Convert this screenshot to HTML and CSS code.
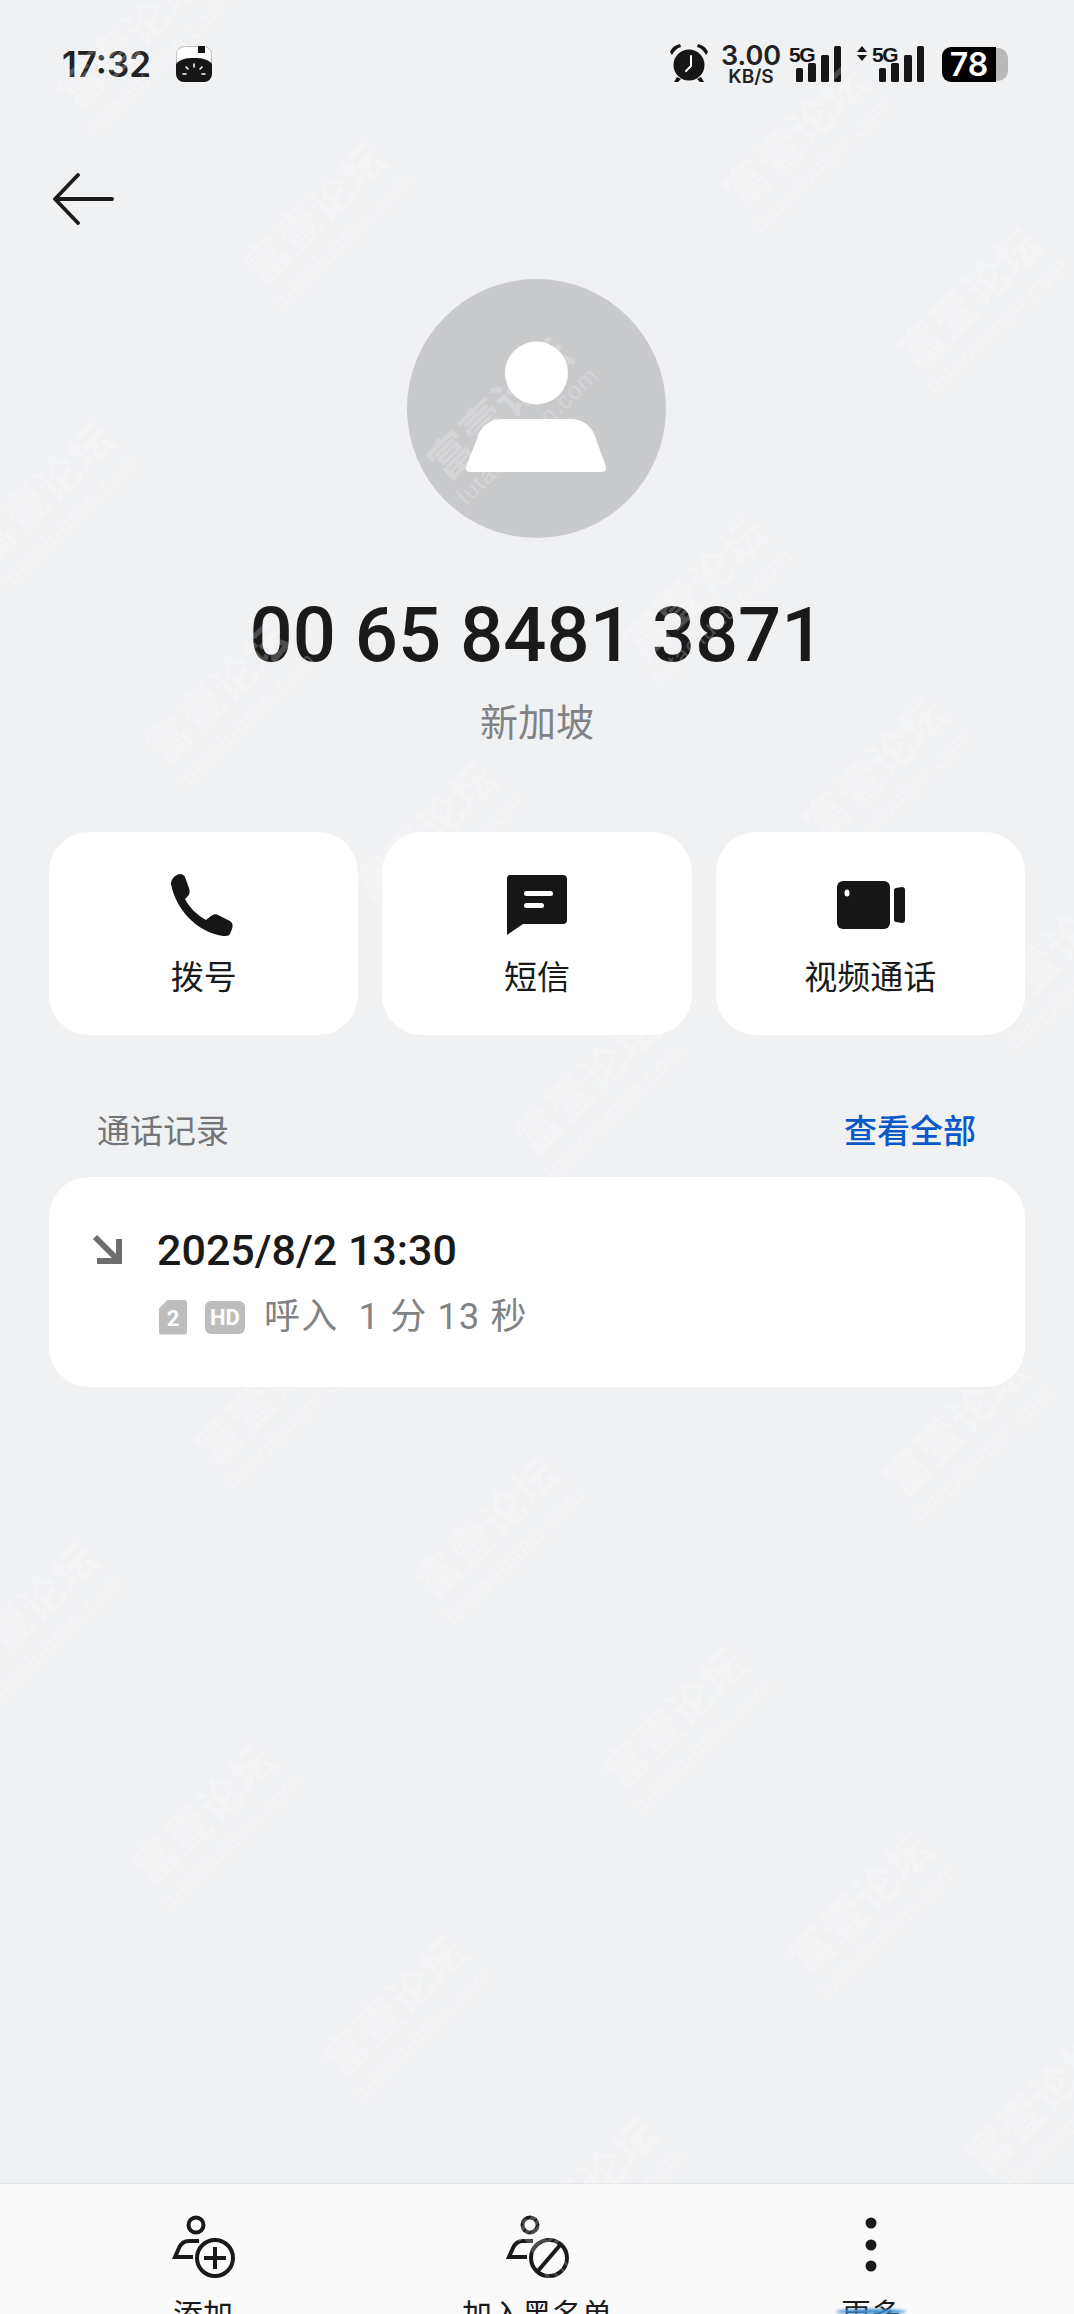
FILE: index.html
```html
<!DOCTYPE html>
<html lang="zh-CN">
<head>
<meta charset="utf-8">
<title>通话详情</title>
<link rel="stylesheet" href="styles.css">
</head>
<body>
<div class="screen">
  <div class="content">
    <header class="status">
      <div class="status-left">
        <span class="time">17:32</span>
        <svg class="app-icon" viewBox="0 0 36 36"><rect x=".5" y=".5" width="35" height="35" rx="8" fill="#fff" stroke="#bbb"/><path d="M0 18C4 13 10 12 18 12s14 1 18 6v10a8 8 0 0 1-8 8H8a8 8 0 0 1-8-8Z" fill="#161616"/><rect x="22" y="0" width="7" height="7" fill="#161616"/><path d="M18 18v3M10 21l2 2M26 21l-2 2M7 28h3M26 28h3" stroke="#fff" stroke-width="1.6" stroke-linecap="round"/></svg>
      </div>
      <div class="status-right">
        <svg class="alarm" viewBox="0 0 40 40"><circle cx="20" cy="22" r="15.5" fill="#161616"/><path d="M1 9C3 4 7 2 11 1l1 3C8 5 5 8 3 12ZM39 9C37 4 33 2 29 1l-1 3c4 1 7 4 9 8ZM8 34l-3 5h4l3-3ZM32 34l3 5h-4l-3-3Z" fill="#161616"/><path d="M22 13v10l-5 5" fill="none" stroke="#fff" stroke-width="2" stroke-linecap="round" stroke-linejoin="round"/></svg>
        <div class="speed"><span class="speed-num">3.00</span><span class="speed-unit">KB/S</span></div>
        <svg class="signal" viewBox="0 0 56 40"><text x="0" y="19" class="sig-text">5G</text><rect x="7" y="25" width="7" height="14" rx="1.5"/><rect x="19" y="20" width="8" height="19" rx="1.5"/><rect x="32" y="12" width="8" height="27" rx="1.5"/><rect x="45" y="3" width="7" height="36" rx="1.5"/></svg>
        <svg class="signal signal-arrows" viewBox="0 0 70 40"><path d="M1 9 6 3l5 6ZM1 12l5 6 5-6Z" fill="#161616"/><text x="16" y="19" class="sig-text">5G</text><rect x="23" y="25" width="7" height="14" rx="1.5"/><rect x="35" y="20" width="8" height="19" rx="1.5"/><rect x="48" y="12" width="8" height="27" rx="1.5"/><rect x="61" y="3" width="7" height="36" rx="1.5"/></svg>
        <div class="battery"><span class="battery-fill">78</span><span class="battery-rest"></span></div>
      </div>
    </header>

    <button class="back" aria-label="返回">
      <svg viewBox="0 0 62 52"><path d="M60 26H3M26 2 3 26l23 24" fill="none" stroke="#1b1b1b" stroke-width="3.8" stroke-linecap="round" stroke-linejoin="round"/></svg>
    </button>

    <section class="profile">
      <svg class="avatar" viewBox="0 0 259 259"><circle cx="129.500" cy="129.500" r="129.500" fill="#c9cacc"/><circle cx="129.500" cy="94" r="31.500" fill="#fff"/><path d="M59 188 71 157C75 146 84 140 96 140H163C175 140 184 146 188 157L199 188C200 191 198 193 195 193H63C60 193 58 191 59 188Z" fill="#fff"/></svg>
      <h1 class="number">00 65 8481 3871</h1>
      <p class="region">新加坡</p>
    </section>

    <nav class="actions">
      <a class="action">
        <svg class="action-icon action-icon-phone" viewBox="0 0 64 64"><path d="M4 4C8 0 13 0 15 4L19 15C20 18 20 21 18 23L15 26C19 34 27 42 36 47L41 43C44 41 46 41 48 42L60 48C63 50 63 53 62 56L60 61C59 63 56 63 53 63 27 59 6 37 1 11 1 8 2 6 4 4Z" fill="#161616"/></svg>
        <span>拨号</span>
      </a>
      <a class="action">
        <svg class="action-icon" viewBox="0 0 64 64"><path d="M5 2H59A4 4 0 0 1 63 6V47A4 4 0 0 1 59 51H19L3 62V6A4 4 0 0 1 5 2Z" fill="#161616" transform="translate(-1 0)"/><rect x="19" y="18" width="29" height="5" rx="2.500" fill="#fff"/><rect x="19" y="30" width="20" height="5" rx="2.500" fill="#fff"/></svg>
        <span>短信</span>
      </a>
      <a class="action">
        <svg class="action-icon action-icon-video" viewBox="0 0 68 48"><rect x="0" y="0" width="53" height="48" rx="6" fill="#161616"/><ellipse cx="10" cy="12" rx="2.500" ry="3.500" fill="#fff"/><path d="M59 7 65 6C67 6 68 7 68 9V39C68 41 67 42 65 42L59 41C58 41 57 40 57 39V9C57 8 58 7 59 7Z" fill="#161616"/></svg>
        <span>视频通话</span>
      </a>
    </nav>

    <div class="history-head">
      <span class="history-title">通话记录</span>
      <a class="history-all">查看全部</a>
    </div>

    <section class="record">
      <svg class="record-arrow" viewBox="0 0 30 30"><path d="M3 3 25 25M27 5V27H5" fill="none" stroke="#6e6e6e" stroke-width="6"/></svg>
      <div class="record-body">
        <div class="record-date">2025/8/2 13:30</div>
        <div class="record-meta">
          <span class="sim">2</span>
          <span class="hd">HD</span>
          <span class="meta-text">呼入&nbsp;&nbsp;1 分 13 秒</span>
        </div>
      </div>
    </section>
  </div>

  <footer class="toolbar">
    <div class="tool">
      <svg class="tool-icon" viewBox="0 0 70 70"><g fill="none" stroke="#1a1a1a" stroke-width="4"><circle cx="28" cy="15" r="7.500"/><path d="M31 31H21Q14 31 11 38L7 47H25"/><circle cx="47" cy="48" r="18"/><path d="M36 48H58M47 37V59"/></g></svg>
      <span>添加</span>
    </div>
    <div class="tool">
      <svg class="tool-icon" viewBox="0 0 70 70"><g fill="none" stroke="#1a1a1a" stroke-width="4"><circle cx="28" cy="15" r="7.500"/><path d="M31 31H21Q14 31 11 38L7 47H25"/><circle cx="47" cy="48" r="18"/><path d="M35 62 59 34"/></g></svg>
      <span>加入黑名单</span>
    </div>
    <div class="tool tool-more">
      <svg class="tool-icon" viewBox="0 0 70 70"><g fill="#1a1a1a"><circle cx="35" cy="13" r="5.500"/><circle cx="35" cy="35" r="5.500"/><circle cx="35" cy="56" r="5.500"/></g></svg>
      <span>更多</span>
    </div>
  </footer>

  <div class="watermarks" aria-hidden="true">
    <div class="wm wm1"><b>富壹论坛</b><i>futaoluntan.com</i></div>
    <div class="wm wm2"><b>富壹论坛</b><i>futaoluntan.com</i></div>
    <div class="wm wm3"><b>富壹论坛</b><i>futaoluntan.com</i></div>
    <div class="wm wm4"><b>富壹论坛</b><i>futaoluntan.com</i></div>
    <div class="wm wm5"><b>富壹论坛</b><i>futaoluntan.com</i></div>
    <div class="wm wm6"><b>富壹论坛</b><i>futaoluntan.com</i></div>
    <div class="wm wm7"><b>富壹论坛</b><i>futaoluntan.com</i></div>
    <div class="wm wm8"><b>富壹论坛</b><i>futaoluntan.com</i></div>
    <div class="wm wm9"><b>富壹论坛</b><i>futaoluntan.com</i></div>
    <div class="wm wm10"><b>富壹论坛</b><i>futaoluntan.com</i></div>
    <div class="wm wm11"><b>富壹论坛</b><i>futaoluntan.com</i></div>
    <div class="wm wm12"><b>富壹论坛</b><i>futaoluntan.com</i></div>
    <div class="wm wm13"><b>富壹论坛</b><i>futaoluntan.com</i></div>
    <div class="wm wm14"><b>富壹论坛</b><i>futaoluntan.com</i></div>
    <div class="wm wm15"><b>富壹论坛</b><i>futaoluntan.com</i></div>
    <div class="wm wm16"><b>富壹论坛</b><i>futaoluntan.com</i></div>
    <div class="wm wm17"><b>富壹论坛</b><i>futaoluntan.com</i></div>
    <div class="wm wm18"><b>富壹论坛</b><i>futaoluntan.com</i></div>
    <div class="wm wm19"><b>富壹论坛</b><i>futaoluntan.com</i></div>
    <div class="wm wm20"><b>富壹论坛</b><i>futaoluntan.com</i></div>
    <div class="wm wm21"><b>富壹论坛</b><i>futaoluntan.com</i></div>
    <div class="wm wm22"><b>富壹论坛</b><i>futaoluntan.com</i></div>
  </div>
</div>
</body>
</html>
```

FILE: styles.css
```css
* { box-sizing: border-box; }
html, body { margin: 0; padding: 0; }
body {
  width: 1074px;
  height: 2314px;
  overflow: hidden;
  background: #f0f1f3;
  font-family: Roboto, "Noto Sans CJK SC", sans-serif;
  color: #1a1a1a;
}
.screen {
  position: relative;
  width: 1074px;
  height: 2314px;
  display: flex;
  flex-direction: column;
  overflow: hidden;
}
.content { flex: 1; min-height: 0; padding: 0 49px; }

/* status bar */
.status {
  height: 126px;
  margin: 0 -49px;
  padding: 43px 66px 0 62px;
  display: flex;
  justify-content: space-between;
  align-items: flex-start;
}
.status-left { display: flex; align-items: center; gap: 25px; margin-top: 3px; }
.time { font-family: Inter, sans-serif; font-weight: 600; font-size: 35px; line-height: 36px; color: #222; }
.app-icon { width: 36px; height: 36px; display: block; }
.status-right { display: flex; align-items: flex-start; }
.alarm { width: 40px; height: 40px; display: block; }
.speed { width: 62px; margin: 1px 0 0 11px; display: flex; flex-direction: column; align-items: center; }
.speed-num { font-family: Inter, sans-serif; font-weight: 600; font-size: 27px; line-height: 24px; color: #222; }
.speed-unit { font-family: Inter, sans-serif; font-weight: 600; font-size: 19px; line-height: 17px; color: #222; }
.signal { width: 56px; height: 40px; margin-left: 7px; fill: #161616; display: block; }
.signal-arrows { width: 70px; margin-left: 11px; }
.sig-text { font-family: "Liberation Sans", sans-serif; font-weight: 700; font-size: 21px; letter-spacing: -1.5px; fill: #161616; }
.battery { display: flex; width: 66px; height: 35px; margin: 4px 0 0 16px; }
.battery-fill {
  width: 54px;
  background: #000;
  color: #fff;
  border-radius: 9px 0 0 9px;
  font-family: Inter, sans-serif;
  font-weight: 600;
  font-size: 32px;
  line-height: 36px;
  text-align: center;
}
.battery-rest { flex: 1; background: #b9b9b9; border-radius: 0 10px 10px 0; margin: 1px 0; }

/* back */
.back {
  display: block;
  width: 62px;
  height: 52px;
  margin: 47px 0 0 3px;
  padding: 0;
  border: 0;
  background: none;
}
.back svg { width: 62px; height: 52px; display: block; }

/* profile */
.profile { display: flex; flex-direction: column; align-items: center; margin-top: 54px; }
.avatar { width: 259px; height: 259px; display: block; margin-right: 2px; }
.number { margin: 52px 0 0; font-size: 76px; font-weight: 500; line-height: 90px; color: #1a1a1a; white-space: nowrap; }
.region { margin: 18px 0 0; font-size: 38px; line-height: 50px; color: #808284; }

/* actions */
.actions { display: grid; grid-template-columns: repeat(3, 1fr); gap: 24px; margin-top: 84px; }
.action {
  height: 203px;
  background: #fff;
  border-radius: 40px;
  display: flex;
  flex-direction: column;
  align-items: center;
  padding-top: 41px;
  font-size: 33px;
  line-height: 44px;
  color: #1a1a1a;
}
.action-icon { width: 64px; height: 64px; display: block; margin-bottom: 19px; }
.action-icon-phone { margin-right: 3px; }
.action-icon-video { width: 68px; height: 48px; margin: 8px 0 27px 2px; }

/* history */
.history-head {
  display: flex;
  justify-content: space-between;
  padding: 0 49px 0 48px;
  margin-top: 75px;
  font-size: 33px;
  line-height: 44px;
}
.history-title { color: #737578; }
.history-all { color: #0a59c8; font-weight: 500; }
.record {
  margin-top: 23px;
  height: 210px;
  background: #fff;
  border-radius: 40px;
  padding: 47px 43px 0;
  display: flex;
  align-items: flex-start;
}
.record-arrow { width: 30px; height: 30px; margin-top: 10px; display: block; flex: none; }
.record-body { margin-left: 35px; }
.record-date { font-size: 43px; font-weight: 500; line-height: 52px; white-space: nowrap; }
.record-meta { display: flex; align-items: center; margin-top: 19px; padding-left: 2px; height: 44px; color: #808284; }
.sim {
  width: 28px;
  height: 35px;
  background: #bdbdbd;
  color: #fff;
  clip-path: polygon(9px 0, 100% 0, 100% 100%, 0 100%, 0 9px);
  border-radius: 3px;
  font-size: 22px;
  font-weight: 700;
  line-height: 37px;
  text-align: center;
}
.hd {
  width: 40px;
  height: 33px;
  margin-left: 18px;
  background: #bdbdbd;
  color: #fff;
  border-radius: 6px;
  font-size: 22px;
  font-weight: 700;
  line-height: 33px;
  text-align: center;
}
.meta-text { margin-left: 19px; font-size: 36px; line-height: 44px; letter-spacing: 1.200px; white-space: nowrap; }

/* toolbar */
.toolbar {
  flex: none;
  height: 131px;
  border-top: 1px solid #e4e5e6;
  background: #fafafa;
  display: grid;
  grid-template-columns: repeat(3, 334px);
  grid-template-rows: 130px;
  padding-left: 36px;
  overflow: hidden;
}
.tool { display: flex; flex-direction: column; align-items: center; height: 130px; padding-top: 26px; font-size: 30px; line-height: 42px; white-space: nowrap; position: relative; }
.tool-icon { width: 70px; height: 70px; display: block; margin-bottom: 14px; flex: none; }
.tool-more::after {
  content: "";
  position: absolute;
  left: 132px;
  bottom: 0;
  width: 70px;
  height: 5px;
  border-radius: 50%;
  background: #3f8fd6;
  filter: blur(1.500px);
}

/* watermark */
.watermarks { position: absolute; inset: 0; pointer-events: none; overflow: hidden; }
.wm {
  position: absolute;
  width: 260px;
  margin: -40px 0 0 -130px;
  display: flex;
  flex-direction: column;
  align-items: center;
  transform: rotate(-44deg);
  color: rgba(255, 255, 255, .24);
}
.wm b { font-size: 44px; line-height: 50px; font-weight: 700; letter-spacing: 1px; }
.wm i { font-size: 24px; line-height: 26px; font-style: normal; font-family: "Liberation Sans", sans-serif; letter-spacing: 1px; }
.wm1 { left: 140px; top: 50px; }
.wm2 { left: 805px; top: 148px; }
.wm3 { left: 325px; top: 225px; }
.wm4 { left: 980px; top: 310px; }
.wm5 { left: 510px; top: 420px; }
.wm6 { left: 52px; top: 505px; }
.wm7 { left: 705px; top: 600px; }
.wm8 { left: 228px; top: 705px; }
.wm9 { left: 885px; top: 780px; }
.wm10 { left: 435px; top: 845px; }
.wm11 { left: 597px; top: 1095px; }
.wm12 { left: 1062px; top: 965px; }
.wm13 { left: 966px; top: 1437px; }
.wm14 { left: 497px; top: 1540px; }
.wm15 { left: 36px; top: 1625px; }
.wm16 { left: 685px; top: 1730px; }
.wm17 { left: 214px; top: 1826px; }
.wm18 { left: 870px; top: 1915px; }
.wm19 { left: 405px; top: 2018px; }
.wm20 { left: 1047px; top: 2115px; }
.wm21 { left: 597px; top: 2200px; }
.wm22 { left: 277px; top: 1405px; }
```
